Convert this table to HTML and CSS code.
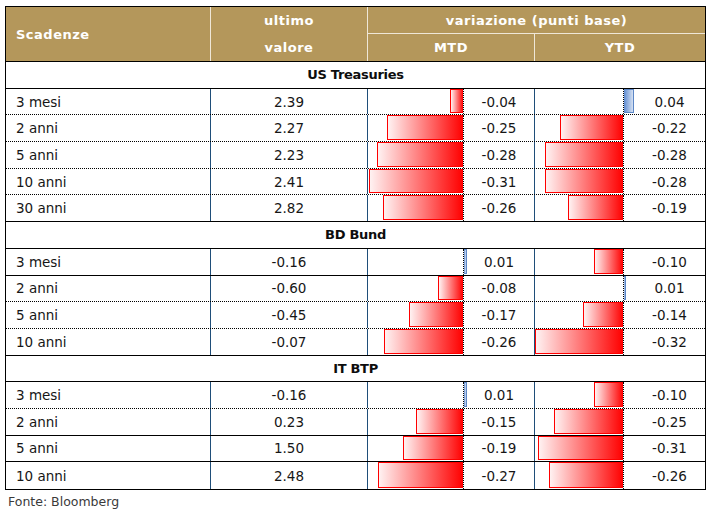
FILE: index.html
```html
<!DOCTYPE html>
<html lang="it">
<head>
<meta charset="utf-8">
<title>Rendimenti</title>
<link rel="stylesheet" href="styles.css">
</head>
<body>
<div class="sheet">
  <div class="head">
    <div class="h-scad">Scadenze</div>
    <div class="h-ult"><span>ultimo</span><span>valore</span></div>
    <div class="h-var">variazione (punti base)</div>
    <div class="h-mtd">MTD</div>
    <div class="h-ytd">YTD</div>
  </div>

  <div class="section">US Treasuries</div>
  <div class="row dotted">
    <div class="name">3 mesi</div><div class="val">2.39</div>
    <div class="cell mtd"><div class="axis"><span class="neg" style="width:13px"></span></div><div class="num">-0.04</div></div>
    <div class="cell ytd"><div class="axis"></div><div class="num"><span class="pos" style="width:10px"></span>0.04</div></div>
  </div>
  <div class="row dotted">
    <div class="name">2 anni</div><div class="val">2.27</div>
    <div class="cell mtd"><div class="axis"><span class="neg" style="width:76px"></span></div><div class="num">-0.25</div></div>
    <div class="cell ytd"><div class="axis"><span class="neg" style="width:63px"></span></div><div class="num">-0.22</div></div>
  </div>
  <div class="row dotted">
    <div class="name">5 anni</div><div class="val">2.23</div>
    <div class="cell mtd"><div class="axis"><span class="neg" style="width:86px"></span></div><div class="num">-0.28</div></div>
    <div class="cell ytd"><div class="axis"><span class="neg" style="width:78px"></span></div><div class="num">-0.28</div></div>
  </div>
  <div class="row dotted">
    <div class="name">10 anni</div><div class="val">2.41</div>
    <div class="cell mtd"><div class="axis"><span class="neg" style="width:94px"></span></div><div class="num">-0.31</div></div>
    <div class="cell ytd"><div class="axis"><span class="neg" style="width:78px"></span></div><div class="num">-0.28</div></div>
  </div>
  <div class="row solid">
    <div class="name">30 anni</div><div class="val">2.82</div>
    <div class="cell mtd"><div class="axis"><span class="neg" style="width:80px"></span></div><div class="num">-0.26</div></div>
    <div class="cell ytd"><div class="axis"><span class="neg" style="width:55px"></span></div><div class="num">-0.19</div></div>
  </div>

  <div class="section">BD Bund</div>
  <div class="row solid">
    <div class="name">3 mesi</div><div class="val">-0.16</div>
    <div class="cell mtd"><div class="axis"></div><div class="num"><span class="pos" style="width:3px"></span>0.01</div></div>
    <div class="cell ytd"><div class="axis"><span class="neg" style="width:29px"></span></div><div class="num">-0.10</div></div>
  </div>
  <div class="row dotted">
    <div class="name">2 anni</div><div class="val">-0.60</div>
    <div class="cell mtd"><div class="axis"><span class="neg" style="width:25px"></span></div><div class="num">-0.08</div></div>
    <div class="cell ytd"><div class="axis"></div><div class="num"><span class="pos" style="width:2px"></span>0.01</div></div>
  </div>
  <div class="row dotted">
    <div class="name">5 anni</div><div class="val">-0.45</div>
    <div class="cell mtd"><div class="axis"><span class="neg" style="width:54px"></span></div><div class="num">-0.17</div></div>
    <div class="cell ytd"><div class="axis"><span class="neg" style="width:40px"></span></div><div class="num">-0.14</div></div>
  </div>
  <div class="row solid">
    <div class="name">10 anni</div><div class="val">-0.07</div>
    <div class="cell mtd"><div class="axis"><span class="neg" style="width:79px"></span></div><div class="num">-0.26</div></div>
    <div class="cell ytd"><div class="axis"><span class="neg" style="width:88px"></span></div><div class="num">-0.32</div></div>
  </div>

  <div class="section">IT BTP</div>
  <div class="row dotted">
    <div class="name">3 mesi</div><div class="val">-0.16</div>
    <div class="cell mtd"><div class="axis"></div><div class="num"><span class="pos" style="width:3px"></span>0.01</div></div>
    <div class="cell ytd"><div class="axis"><span class="neg" style="width:29px"></span></div><div class="num">-0.10</div></div>
  </div>
  <div class="row solid">
    <div class="name">2 anni</div><div class="val">0.23</div>
    <div class="cell mtd"><div class="axis"><span class="neg" style="width:47px"></span></div><div class="num">-0.15</div></div>
    <div class="cell ytd"><div class="axis"><span class="neg" style="width:69px"></span></div><div class="num">-0.25</div></div>
  </div>
  <div class="row solid">
    <div class="name">5 anni</div><div class="val">1.50</div>
    <div class="cell mtd"><div class="axis"><span class="neg" style="width:60px"></span></div><div class="num">-0.19</div></div>
    <div class="cell ytd"><div class="axis"><span class="neg" style="width:85px"></span></div><div class="num">-0.31</div></div>
  </div>
  <div class="row last">
    <div class="name">10 anni</div><div class="val">2.48</div>
    <div class="cell mtd"><div class="axis"><span class="neg" style="width:85px"></span></div><div class="num">-0.27</div></div>
    <div class="cell ytd"><div class="axis"><span class="neg" style="width:74px"></span></div><div class="num">-0.26</div></div>
  </div>
</div>
<p class="source">Fonte: Bloomberg</p>
</body>
</html>
```

FILE: styles.css
```css
* { box-sizing: border-box; }

html, body {
  margin: 0;
  background: #ffffff;
}

body {
  padding: 6px 0 0 5px;
  font-family: "DejaVu Sans", "Liberation Sans", sans-serif;
  font-size: 13.5px;
  color: #161616;
}

.sheet {
  width: 701px;
  border: 1px solid #000;
}

.head {
  display: grid;
  grid-template-columns: 205px 157px 167px 170px;
  grid-template-rows: 27px 27px;
  background: #b4975b;
  color: #fff;
  font-weight: bold;
  font-size: 13px;
  border-bottom: 1px solid #000;
}

.h-scad {
  grid-row: 1 / 3;
  grid-column: 1;
  display: flex;
  align-items: center;
  padding-left: 10px;
  letter-spacing: 0.5px;
  border-right: 1px solid #efe7d8;
}

.h-ult {
  grid-row: 1 / 3;
  grid-column: 2;
  display: grid;
  grid-template-rows: 27px 27px;
  align-items: center;
  justify-items: center;
  letter-spacing: 0.5px;
  border-right: 1px solid #efe7d8;
}

.h-var {
  grid-row: 1;
  grid-column: 3 / 5;
  display: flex;
  align-items: center;
  justify-content: center;
  letter-spacing: 0.5px;
  border-bottom: 1px solid #efe7d8;
}

.h-mtd, .h-ytd {
  grid-row: 2;
  display: flex;
  align-items: center;
  justify-content: center;
  letter-spacing: 0.5px;
}

.h-mtd {
  grid-column: 3;
  border-right: 1px solid #efe7d8;
}

.h-ytd { grid-column: 4; }

.section {
  height: 26.7px;
  display: flex;
  align-items: center;
  justify-content: center;
  font-weight: bold;
  font-size: 13px;
  letter-spacing: -0.3px;
  color: #0d0d0d;
  border-bottom: 1px solid #000;
}

.row {
  height: 26.7px;
  display: grid;
  grid-template-columns: 205px 157px 167px 170px;
}

.row.dotted { border-bottom: 1px dotted #000; }
.row.solid { border-bottom: 1px solid #000; }

.name {
  display: flex;
  align-items: center;
  padding-left: 10px;
  border-right: 1px solid #1f4e79;
}

.val {
  display: flex;
  align-items: center;
  justify-content: center;
  border-right: 1px solid #1f4e79;
}

.cell {
  display: flex;
}

.cell.mtd { border-right: 1px solid #1f4e79; }

.axis {
  display: flex;
  justify-content: flex-end;
  padding-bottom: 1px;
  border-right: 1px dotted #000;
}

.mtd .axis { width: 96px; }
.ytd .axis { width: 89px; }

.num {
  position: relative;
  flex: 1;
  display: flex;
  align-items: center;
  justify-content: center;
}

.ytd .num { padding-left: 10px; }

.neg {
  display: block;
  height: 100%;
  border: 1px solid #ff0000;
  border-right: none;
  background: linear-gradient(to right, #fff2f2, #ff0000);
}

.pos {
  position: absolute;
  left: 0;
  top: 0;
  bottom: 1px;
  border: 1px solid #5b86c6;
  border-left: none;
  background: linear-gradient(to right, #5e8bd0, #d6e1f2);
}

.source {
  margin: 4px 0 0 3px;
  font-size: 12.5px;
  color: #3a3a3a;
}
```
